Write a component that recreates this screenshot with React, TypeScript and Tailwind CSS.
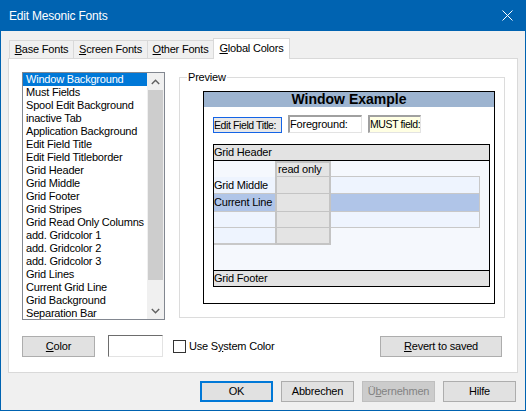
import React from "react";

const items = [
  "Window Background",
  "Must Fields",
  "Spool Edit Background",
  "inactive Tab",
  "Application Background",
  "Edit Field Title",
  "Edit Field Titleborder",
  "Grid Header",
  "Grid Middle",
  "Grid Footer",
  "Grid Stripes",
  "Grid Read Only Columns",
  "add. Gridcolor 1",
  "add. Gridcolor 2",
  "add. Gridcolor 3",
  "Grid Lines",
  "Current Grid Line",
  "Grid Background",
  "Separation Bar",
];

function Btn({
  children,
  className = "",
}: {
  children: React.ReactNode;
  className?: string;
}) {
  return (
    <div
      className={
        "h-[21px] flex items-center justify-center bg-[#E1E1E1] border border-[#ADADAD] text-[11px] text-black " +
        className
      }
    >
      {children}
    </div>
  );
}

export default function App() {
  return (
    <div
      className="w-[526px] h-[411px] bg-[#0063B1] px-px pb-px flex flex-col overflow-hidden tracking-[-0.2px]"
      style={{ fontFamily: '"Liberation Sans", Arial, sans-serif' }}
    >
      {/* Title bar */}
      <div className="h-[31px] shrink-0 flex items-center justify-between pl-[8px] pr-[12px] text-white text-[12px]">
        <span>Edit Mesonic Fonts</span>
        <svg width="11" height="11" viewBox="0 0 11 11">
          <path d="M0.5 0.5 L10.5 10.5 M10.5 0.5 L0.5 10.5" stroke="white" strokeWidth="1" fill="none" />
        </svg>
      </div>

      {/* Body */}
      <div className="flex-1 bg-[#F0F0F0] flex flex-col">
        {/* Tabs */}
        <div className="ml-[8px] mt-[7px] h-[20px] flex items-end text-[11px] text-black">
          <div className="w-[65px] h-[18px] border border-b-0 border-[#D9D9D9] flex items-center justify-center">
            <span><span className="underline">B</span>ase Fonts</span>
          </div>
          <div className="-ml-px w-[75px] h-[18px] border border-b-0 border-[#D9D9D9] flex items-center justify-center">
            <span><span className="underline">S</span>creen Fonts</span>
          </div>
          <div className="-ml-px w-[67px] h-[18px] border border-b-0 border-[#D9D9D9] flex items-center justify-center">
            <span><span className="underline">O</span>ther Fonts</span>
          </div>
          <div className="-ml-px -mb-px relative z-10 w-[77px] h-[21px] bg-white border border-b-0 border-[#D9D9D9] flex items-center justify-center pb-[2px]">
            <span><span className="underline">G</span>lobal Colors</span>
          </div>
        </div>

        {/* Panel */}
        <div className="ml-[7px] w-[510px] h-[315px] bg-white border border-[#D9D9D9] flex flex-col">
          <div className="flex pt-[13px] pl-[13px]">
            {/* Listbox */}
            <div className="w-[143px] h-[248px] border border-[#828790] flex overflow-hidden">
              <div className="flex-1 flex flex-col overflow-hidden text-[11px] text-black">
                {items.map((it, i) => (
                  <div
                    key={it}
                    className={
                      "h-[13px] shrink-0 leading-[13px] pl-[3px] whitespace-nowrap " +
                      (i === 0 ? "bg-[#0078D7] text-white" : "")
                    }
                  >
                    {it}
                  </div>
                ))}
              </div>
              <div className="w-[17px] shrink-0 bg-[#F0F0F0] flex flex-col">
                <div className="h-[17px] flex items-center justify-center">
                  <svg width="9" height="6" viewBox="0 0 9 6">
                    <path d="M0.8 5 L4.5 1.3 L8.2 5" stroke="#606060" strokeWidth="1.4" fill="none" />
                  </svg>
                </div>
                <div className="mx-px h-[190px] bg-[#CDCDCD]" />
                <div className="flex-1" />
                <div className="h-[17px] flex items-center justify-center">
                  <svg width="9" height="6" viewBox="0 0 9 6">
                    <path d="M0.8 1 L4.5 4.7 L8.2 1" stroke="#606060" strokeWidth="1.4" fill="none" />
                  </svg>
                </div>
              </div>
            </div>

            {/* Group box */}
            <div className="ml-[14px] mt-[5px] w-[326px] h-[241px] border border-[#DCDCDC] relative">
              <span className="absolute left-[7px] -top-[8px] px-px bg-white text-[11px] leading-[14px] text-black">
                Preview
              </span>

              {/* Window Example */}
              <div
                className="ml-[23px] mt-[13px] w-[292px] h-[213px] border border-black bg-white flex flex-col"
                style={{ fontFamily: '"Liberation Sans", Tahoma, sans-serif' }}
              >
                <div className="h-[15px] bg-[#9DB4D0] text-center font-bold text-[14px] leading-[15px] text-black tracking-normal">
                  Window Example
                </div>
                <div className="mt-[8px] ml-[9px] flex items-end text-[11px] text-black">
                  <div className="w-[69px] h-[16px] border border-[#1464E6] bg-[#E8E8E8] leading-[14px] whitespace-nowrap overflow-hidden text-[10.5px] tracking-[-0.4px]">
                    Edit Field Title:
                  </div>
                  <div className="ml-[6px] w-[74px] h-[18px] border-t-2 border-l-2 border-t-[#A0A0A0] border-l-[#A0A0A0] border-r border-b border-r-[#E3E3E3] border-b-[#E3E3E3] bg-white leading-[15px] whitespace-nowrap">
                    Foreground:
                  </div>
                  <div className="ml-[6px] w-[53px] h-[18px] border-t-2 border-l-2 border-t-[#A0A0A0] border-l-[#A0A0A0] border-r border-b border-r-[#E3E3E3] border-b-[#E3E3E3] bg-[#FFFFE3] leading-[15px] whitespace-nowrap overflow-hidden text-[10.5px] tracking-[-0.4px]">
                    MUST field:
                  </div>
                </div>

                {/* Grid */}
                <div className="mt-[11px] ml-[9px] w-[277px] h-[143px] border border-black flex flex-col text-[11px] text-black">
                  <div className="h-[16px] bg-[#E3E3E3] border-b border-black leading-[15px]">Grid Header</div>
                  <div className="flex-1 bg-[#F5F8FD] flex flex-col">
                    {/* Row A */}
                    <div className="h-[16px] flex">
                      <div className="w-[61px]" />
                      <div className="w-[56px] bg-[#E4E4E4] border-l-2 border-r-2 border-t-2 border-b border-[#C4C4C4] leading-[12px] pl-px">
                        read only
                      </div>
                      <div className="w-[149px] border-b border-[#C8C8C8]" />
                    </div>
                    {/* Row B */}
                    <div className="h-[17px] flex">
                      <div className="w-[61px] bg-[#EEF4FE] border-b border-[#C8C8C8] leading-[16px]">Grid Middle</div>
                      <div className="w-[56px] bg-[#E4E4E4] border-l-2 border-r-2 border-b border-[#C4C4C4]" />
                      <div className="w-[149px] bg-[#EEF4FE] border-b border-r border-[#C8C8C8]" />
                    </div>
                    {/* Row C */}
                    <div className="h-[18px] flex">
                      <div className="w-[61px] bg-[#B0C5E8] border-b border-[#C8C8C8] leading-[17px] whitespace-nowrap overflow-hidden">Current Line</div>
                      <div className="w-[56px] bg-[#E4E4E4] border-l-2 border-r-2 border-b border-[#C4C4C4]" />
                      <div className="w-[149px] bg-[#B0C5E8] border-b border-r border-[#C8C8C8]" />
                    </div>
                    {/* Row D */}
                    <div className="h-[16px] flex">
                      <div className="w-[61px] bg-[#EEF4FE] border-b border-[#C8C8C8]" />
                      <div className="w-[56px] bg-[#E4E4E4] border-l-2 border-r-2 border-b border-[#C4C4C4]" />
                      <div className="w-[149px] bg-[#EEF4FE] border-b border-r border-[#C8C8C8]" />
                    </div>
                    {/* Row E */}
                    <div className="h-[17px] flex">
                      <div className="w-[61px] bg-[#EEF4FE] border-b-2 border-[#C8C8C8]" />
                      <div className="w-[56px] bg-[#E4E4E4] border-l-2 border-r-2 border-b-2 border-[#C4C4C4]" />
                    </div>
                  </div>
                  <div className="h-[16px] bg-[#E3E3E3] border-t border-black leading-[15px]">Grid Footer</div>
                </div>
              </div>
            </div>
          </div>

          {/* Bottom controls */}
          <div className="mt-[15px] h-[22px] pl-[13px] pr-[15px] flex items-center text-[11px] text-black">
            <Btn className="w-[73px]">
              <span><span className="underline">C</span>olor</span>
            </Btn>
            <div className="ml-[13px] w-[55px] h-[22px] bg-white border-t border-l border-t-[#6D6D6D] border-l-[#6D6D6D] border-r border-b border-r-[#E3E3E3] border-b-[#E3E3E3]" />
            <div className="ml-[10px] w-[13px] h-[13px] border border-[#333333] bg-white" />
            <span className="ml-[3px]">
              Use S<span className="underline">y</span>stem Color
            </span>
            <Btn className="ml-auto w-[122px]">
              <span><span className="underline">R</span>evert to saved</span>
            </Btn>
          </div>
        </div>

        {/* Dialog buttons */}
        <div className="mt-[8px] pr-[9px] flex justify-end gap-[8px]">
          <div className="w-[73px] h-[21px] flex items-center justify-center bg-[#E1E1E1] border-2 border-[#0078D7] text-[11px] text-black">
            OK
          </div>
          <Btn className="w-[73px]">Abbrechen</Btn>
          <div className="w-[73px] h-[21px] flex items-center justify-center bg-[#CCCCCC] border border-[#BFBFBF] text-[11px] text-[#838383]">
            <span>Ü<span className="underline">b</span>ernehmen</span>
          </div>
          <Btn className="w-[73px]">Hilfe</Btn>
        </div>
      </div>
    </div>
  );
}
